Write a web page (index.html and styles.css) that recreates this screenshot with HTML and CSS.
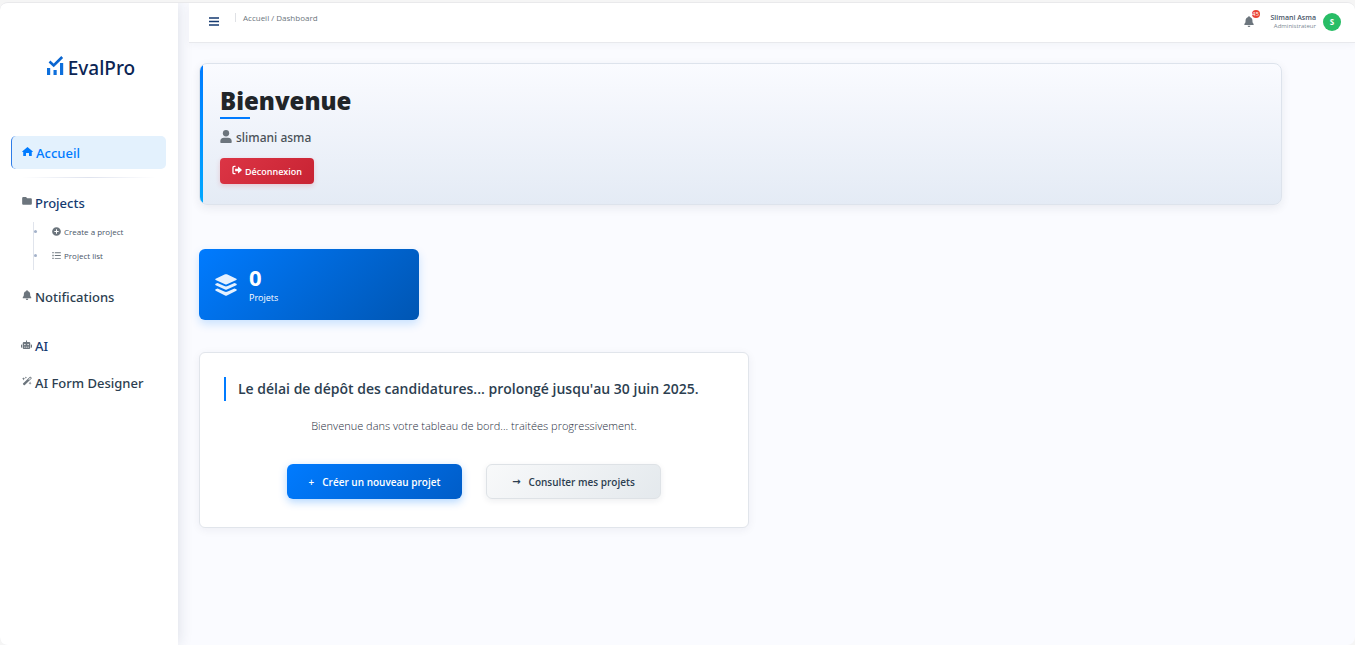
FILE: index.html
```html
<!DOCTYPE html>
<html lang="fr">
<head>
<meta charset="utf-8">
<title>EvalPro - Dashboard</title>
<link rel="stylesheet" href="styles.css">
</head>
<body>
<div class="app">
  <aside class="sidebar">
    <a class="logo" href="#">
      <svg class="logo-mark" viewBox="0 0 17 20"><path d="M0 12h3.200v7H0zM6.500 14h3.200v5H6.500zM13 7h3.200v12H13z" fill="#0d6fdc"/><path d="M2.500 5.500l4.200 4 8.500-8.500" fill="none" stroke="#0b66d0" stroke-width="2.600"/></svg>
      <span>EvalPro</span>
    </a>
    <nav class="nav">
      <a class="nav-link active" href="#"><svg class="icon" viewBox="0 0 576 512"><path d="M288 16L8 262q-5 26 20 26h36v184q0 24 24 24h100q20 0 20-20V350q0-20 20-20h120q20 0 20 20v126q0 20 20 20h100q24 0 24-24V288h36q25 0 20-26z"/></svg>Accueil</a>
      <div class="rule"></div>
      <a class="nav-link section" href="#"><svg class="icon" viewBox="0 0 512 512"><path d="M64 448q-56 0-56-56V112q0-56 56-56h128q24 0 42 20l22 26q10 12 26 12h166q56 0 56 56v222q0 56-56 56z"/></svg>Projects</a>
      <ul class="sub">
        <li><a href="#"><svg class="icon" viewBox="0 0 512 512"><path fill-rule="evenodd" d="M256 8a248 248 0 1 0 0 496 248 248 0 0 0 0-496zM226 134h60v92h92v60h-92v92h-60v-92h-92v-60h92z"/></svg>Create a project</a></li>
        <li><a href="#"><svg class="icon" viewBox="0 0 512 512"><path d="M20 60h75v75H20zM20 220h75v75H20zM20 380h75v75H20zM160 72h340v52H160zM160 232h340v52H160zM160 392h340v52H160z"/></svg>Project list</a></li>
      </ul>
      <a class="nav-link notif" href="#"><svg class="icon bell" viewBox="0 0 448 512"><path d="M224 0q-32 0-32 32v20C115 68 64 132 64 208c0 96-18 122-50 158-24 28-10 50 18 50h384c28 0 42-22 18-50-32-36-50-62-50-158 0-76-51-140-128-156V32q0-32-32-32zM160 448a64 64 0 0 0 128 0z"/></svg>Notifications</a>
      <a class="nav-link section" href="#"><svg class="icon robot" viewBox="0 0 640 512"><path fill-rule="evenodd" d="M290 0h60v80h120q70 0 70 70v268q0 70-70 70H170q-70 0-70-70V150q0-70 70-70h120zM225 190a42 42 0 1 0 0 84 42 42 0 0 0 0-84zM415 190a42 42 0 1 0 0 84 42 42 0 0 0 0-84zM180 364h70v36h-70zM285 364h70v36h-70zM390 364h70v36h-70zM64 224v192H40q-40 0-40-40V264q0-40 40-40zM576 224v192h24q40 0 40-40V264q0-40-40-40z"/></svg>AI</a>
      <a class="nav-link" href="#"><svg class="icon" viewBox="0 0 576 512"><path fill-rule="evenodd" d="M460 14q18-16 36 0l56 56q18 18 0 36L150 498q-18 16-36 0l-56-56q-18-18 0-36zM476 58L364 168l36 36L510 92zM224 0l18 42 42 18-42 18-18 42-18-42-42-18 42-18zM90 40l26 64 64 26-64 26-26 64-26-64-64-26 64-26zM464 290l26 64 64 26-64 26-26 64-26-64-64-26 64-26z"/></svg>AI Form Designer</a>
    </nav>
  </aside>
  <div class="main">
    <header class="topbar">
      <button class="menu" aria-label="Menu"><svg viewBox="0 0 10 9"><path d="M0 1h10M0 4.500h10M0 8h10" stroke="#153a70" stroke-width="1.300"/></svg></button>
      <div class="crumbs"><a href="#">Accueil</a> / <span>Dashboard</span></div>
      <div class="tools">
        <button class="alerts" aria-label="Notifications"><svg viewBox="0 0 448 512"><path d="M224 0q-32 0-32 32v20C115 68 64 132 64 208c0 96-18 122-50 158-24 28-10 50 18 50h384c28 0 42-22 18-50-32-36-50-62-50-158 0-76-51-140-128-156V32q0-32-32-32zM160 448a64 64 0 0 0 128 0z"/></svg><span class="badge">45</span></button>
        <div class="user"><strong>Slimani Asma</strong><small>Administrateur</small></div>
        <div class="avatar">S</div>
      </div>
    </header>
    <main class="content">
      <section class="welcome">
        <h1>Bienvenue</h1>
        <p class="name"><svg viewBox="0 0 448 512"><circle cx="224" cy="128" r="124"/><path d="M0 480v-30q0-146 146-146h156q146 0 146 146v30q0 28-28 28H28q-28 0-28-28z"/></svg>slimani asma</p>
        <button class="logout"><svg viewBox="0 0 512 512"><path d="M180 72H110q-60 0-60 60v248q0 60 60 60h70" fill="none" stroke="#fff" stroke-width="68"/><path fill="#fff" d="M160 190h150V96q0-24 22-10l170 154q12 16 0 32L332 426q-22 14-22-10v-94H160z"/></svg>Déconnexion</button>
      </section>
      <section class="stat">
        <svg viewBox="0 0 512 512"><path d="M234 8q22-10 44 0l218 100q22 16 0 32L278 240q-22 10-44 0L16 140q-22-16 0-32zM60 208l157 72q39 18 78 0l157-72 44 20q22 16 0 32L278 360q-22 10-44 0L16 260q-22-16 0-32zM60 336l157 72q39 18 78 0l157-72 44 20q22 16 0 32L278 500q-22 10-44 0L16 388q-22-16 0-32z"/></svg>
        <div><strong>0</strong><span>Projets</span></div>
      </section>
      <section class="notice">
        <h2>Le délai de dépôt des candidatures... prolongé jusqu'au 30 juin 2025.</h2>
        <p>Bienvenue dans votre tableau de bord... traitées progressivement.</p>
        <div class="actions">
          <button class="btn primary"><span>+</span>Créer un nouveau projet</button>
          <button class="btn"><span class="arrow">→</span>Consulter mes projets</button>
        </div>
      </section>
    </main>
  </div>
</div>
</body>
</html>
```
FILE: styles.css
```css
* { box-sizing: border-box; }
body {
  margin: 0;
  padding-top: 2px;
  background: #f5f5f5;
  font-family: "Open Sans", "Noto Sans", sans-serif;
  color: #2c3e50;
}
a { color: inherit; text-decoration: none; }
button { font-family: inherit; cursor: pointer; }
h1, h2, p, ul { margin: 0; padding: 0; }
.app {
  display: flex;
  min-height: calc(100vh - 2px);
  border-top: 1px solid #e9e9eb;
  border-radius: 8px;
  background: #fafbff;
  overflow: hidden;
}
.sidebar {
  flex: 0 0 178px;
  background: #fff;
  box-shadow: 0 0 14px rgba(30, 40, 70, 0.14);
}
.logo {
  display: flex;
  align-items: center;
  justify-content: center;
  gap: 4px;
  height: 133px;
  padding: 0 0 4px 4px;
  font: 500 19px "Noto Sans", sans-serif;
  color: #0b2554;
}
.logo-mark { width: 17px; height: 20px; margin-bottom: 3px; }
.nav {
  display: flex;
  flex-direction: column;
  padding: 0 12px 0 11px;
}
.nav-link {
  display: flex;
  align-items: center;
  gap: 3px;
  height: 33px;
  margin-bottom: 4px;
  padding-left: 11px;
  font-family: "Noto Sans", sans-serif;
  font-size: 13px;
  font-weight: 500;
}
.nav-link.active {
  margin: 0;
  padding-left: 10px;
  border-left: 1px solid #2d7ce8;
  border-radius: 5px;
  background: #e3f1fd;
  color: #007bff;
}
.nav-link.section { color: #153a70; }
.icon { width: 10px; height: 10px; margin-bottom: 4px; fill: #6c757d; }
.active .icon { width: 11px; height: 11px; margin-bottom: 2px; fill: #007bff; }
.robot { width: 11px; margin: 0 0 1px -1px; }
.rule {
  height: 1px;
  margin: 8px 10px;
  background: linear-gradient(90deg, transparent, #dfe3ee, transparent);
}
.sub {
  display: flex;
  flex-direction: column;
  height: 48px;
  margin: -1px 0 10px 22px;
  border-left: 1px solid #e0e4ec;
  list-style: none;
}
.sub li {
  display: flex;
  align-items: center;
  height: 24px;
  padding-bottom: 5px;
  font-size: 8px;
  color: #4a5568;
}
.sub li::before {
  content: "";
  width: 3px;
  height: 3px;
  margin-right: 15px;
  border-radius: 50%;
  background: #a3b1c9;
}
.sub a { display: flex; align-items: center; gap: 3px; }
.sub .icon { width: 9px; height: 9px; margin: 0; }
.notif { margin-bottom: 16px; }
.main { flex: 1; padding-left: 11px; min-width: 0; }
.topbar {
  display: flex;
  align-items: center;
  height: 40px;
  padding: 0 14px 2px 20px;
  background: #fff;
  border-bottom: 1px solid #e8e9ed;
  box-shadow: 0 2px 8px rgba(30, 40, 70, 0.04);
}
.menu { display: flex; padding: 0; border: 0; background: none; }
.menu svg { width: 10px; height: 9px; }
.crumbs {
  margin: 0 0 8px 16px;
  padding-left: 7px;
  border-left: 1px solid #dfe1e5;
  font-size: 8px;
  line-height: 9px;
  color: #6c757d;
}
.tools { display: flex; align-items: center; margin-left: auto; }
.alerts {
  position: relative;
  display: flex;
  margin-right: 17px;
  padding: 0;
  border: 0;
  background: none;
}
.alerts svg { width: 10px; height: 11px; fill: #6c757d; }
.badge {
  position: absolute;
  top: -6px;
  right: -6px;
  width: 8px;
  height: 8px;
  border-radius: 50%;
  background: #ea4335;
  color: #fff;
  font-size: 6px;
  line-height: 8px;
  text-align: center;
}
.user {
  display: flex;
  flex-direction: column;
  margin-right: 7px;
  text-align: right;
}
.user strong { font-size: 7px; line-height: 9px; font-weight: 600; color: #4a5568; }
.user small { font-size: 6px; line-height: 8px; color: #7b8794; }
.avatar {
  width: 18px;
  height: 18px;
  border-radius: 50%;
  background: #28bd66;
  color: #fff;
  font-size: 8px;
  font-weight: 700;
  line-height: 18px;
  text-align: center;
}
.content { padding: 20px 73px 20px 10px; }
.welcome {
  position: relative;
  height: 142px;
  padding: 21px 20px;
  overflow: hidden;
  border: 1px solid #dde3ec;
  border-radius: 8px;
  background: linear-gradient(#fafbff, #e4ebf5);
  box-shadow: 0 3px 10px rgba(30, 40, 70, 0.08);
}
.welcome::before {
  content: "";
  position: absolute;
  inset: 0 auto 0 0;
  width: 3px;
  background: linear-gradient(#007bff, #00a8ff);
}
.welcome h1 {
  font-size: 24px;
  font-weight: 800;
  line-height: 32px;
  color: #212529;
}
.welcome h1::after {
  content: "";
  display: block;
  width: 30px;
  height: 2px;
  background: #007bff;
}
.name {
  display: flex;
  align-items: center;
  gap: 4px;
  margin-top: 9px;
  font: 500 12px/20px "Noto Sans", sans-serif;
  color: #495057;
}
.name svg { width: 12px; height: 13px; margin-bottom: 3px; fill: #6c757d; }
.logout {
  display: flex;
  align-items: center;
  justify-content: center;
  gap: 3px;
  width: 94px;
  height: 26px;
  margin-top: 10px;
  padding: 0;
  border: 0;
  border-radius: 4px;
  background: linear-gradient(135deg, #dc3545, #c82333);
  box-shadow: 0 2px 5px rgba(220, 53, 69, 0.2);
  color: #fff;
  font-size: 9px;
  font-weight: 600;
}
.logout svg { width: 10px; height: 10px; margin-bottom: 2px; }
.stat {
  display: flex;
  align-items: center;
  gap: 12px;
  width: 220px;
  height: 71px;
  margin-top: 44px;
  padding: 0 16px;
  border-radius: 6px;
  background: linear-gradient(135deg, #007bff, #0056b3);
  box-shadow: 0 4px 10px rgba(0, 123, 255, 0.2);
  color: #fff;
}
.stat svg { width: 22px; height: 22px; fill: #e5f1ff; }
.stat div { display: flex; flex-direction: column; padding-bottom: 2px; }
.stat strong { font-size: 22px; line-height: 28px; }
.stat span { font-size: 9px; line-height: 14px; }
.notice {
  width: 550px;
  max-width: 100%;
  margin-top: 32px;
  padding: 24px 24px 28px;
  border: 1px solid #e1e5eb;
  border-radius: 6px;
  background: #fff;
  box-shadow: 0 2px 10px rgba(30, 40, 70, 0.06);
}
.notice h2 {
  padding-left: 12px;
  border-left: 2px solid #007bff;
  font-size: 14px;
  font-weight: 600;
  line-height: 24px;
}
.notice p {
  margin: 15px 0 28px;
  font-size: 11px;
  font-weight: 300;
  line-height: 20px;
  color: #1f2d3d;
  text-align: center;
}
.actions { display: flex; justify-content: center; gap: 24px; }
.btn {
  display: flex;
  align-items: center;
  justify-content: center;
  gap: 8px;
  width: 175px;
  height: 35px;
  padding: 0;
  border: 1px solid #dee2e6;
  border-radius: 6px;
  background: linear-gradient(135deg, #f8f9fa, #e4e9ed);
  box-shadow: 0 2px 6px rgba(30, 40, 70, 0.08);
  color: #2c3e50;
  font-size: 10px;
  font-weight: 600;
}
.btn.primary {
  border: 0;
  background: linear-gradient(135deg, #007bff, #005dc8);
  box-shadow: 0 3px 8px rgba(0, 123, 255, 0.3);
  color: #fff;
}
.arrow { font-family: "DejaVu Sans", sans-serif; }
```
